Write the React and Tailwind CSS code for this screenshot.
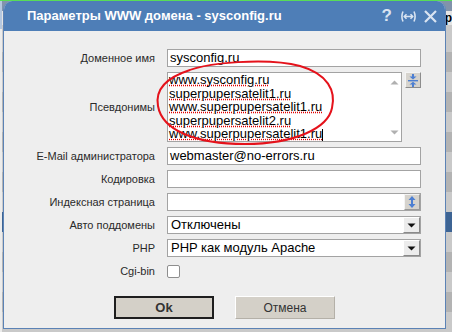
import React from "react";

const Label = ({ children }) => (
  <div className="text-right text-[11px] leading-[13px] text-[#2a2a2a] whitespace-nowrap">{children}</div>
);

const TextInput = ({ value }) => (
  <div className="h-[18px] bg-white border border-[#a3a3a3] pl-[2px] text-[13px] leading-[16px] text-black whitespace-nowrap overflow-hidden">
    {value}
  </div>
);

const SelectBox = ({ value }) => (
  <div className="h-[18px] bg-white border border-[#a3a3a3] flex items-stretch">
    <div className="flex-1 pl-[3px] text-[13px] leading-[16px] text-black whitespace-nowrap">{value}</div>
    <div className="w-[17px] bg-[#ececec] border-t border-l border-t-white border-l-white border-b border-r border-b-[#8a8a8a] border-r-[#8a8a8a] flex items-center justify-center">
      <svg width="9" height="5" viewBox="0 0 9 5">
        <path d="M0.5 0.5 H8.5 L4.5 4.5 Z" fill="#111" />
      </svg>
    </div>
  </div>
);

const aliases = [
  "www.sysconfig.ru",
  "superpupersatelit1.ru",
  "www.superpupersatelit1.ru",
  "superpupersatelit2.ru",
  "www.superpupersatelit1.ru",
];

const stripes = [
  ["h-[27px]", "bg-[#c9c9c9]"],
  ["h-[20px]", "bg-[#b3b3b3]"],
  ["h-[20px]", "bg-[#c9c9c9]"],
  ["h-[20px]", "bg-[#b3b3b3]"],
  ["h-[20px]", "bg-[#c9c9c9]"],
  ["h-[20px]", "bg-[#b3b3b3]"],
  ["h-[20px]", "bg-[#c9c9c9]"],
  ["h-[20px]", "bg-[#b3b3b3]"],
  ["h-[20px]", "bg-[#c9c9c9]"],
  ["h-[20px]", "bg-[#3d6494]"],
  ["h-[20px]", "bg-[#c9c9c9]"],
  ["h-[20px]", "bg-[#b3b3b3]"],
  ["h-[20px]", "bg-[#c9c9c9]"],
  ["h-[20px]", "bg-[#b3b3b3]"],
  ["h-[20px]", "bg-[#c9c9c9]"],
];

export default function App() {
  return (
    <div className="relative w-[452px] h-[332px] overflow-hidden bg-[#c6c6c6] font-['Liberation_Sans',Arial,sans-serif]">
      {/* background page */}
      <div className="flex flex-col h-full">
        <div className="h-[2px] bg-[#58dc58]" />
        <div className="flex flex-1">
          <div className="w-[9px] flex flex-col">
            <div className="h-[28px] bg-[#b4c7df]" />
            <div className="flex-1 bg-[#ececec]" />
          </div>
          <div className="flex-1 flex flex-col">
            <div className="h-[10px] bg-[#8193ab]" />
            <div className="h-[14px] bg-[#e4e4e4] pl-[437px] text-[12px] leading-[14px] font-bold text-black">тр</div>
            {stripes.map(([h, c], i) => (
              <div key={i} className={`${h} ${c}`} />
            ))}
          </div>
        </div>
      </div>

      {/* dialog window */}
      <div className="absolute left-[3px] top-[1px] w-[443px] h-[328px] rounded-t-[9px] border-x border-b border-[#5b82b5] bg-[#eeeeee] flex flex-col overflow-hidden">
        <div className="h-[30px] shrink-0 bg-[#4e7eb7] flex items-center pl-[23px] pr-[8px]">
          <div className="text-white font-bold text-[13px] leading-[16px] whitespace-nowrap">
            Параметры WWW домена - sysconfig.ru
          </div>
          <div className="ml-auto flex items-center">
            <span className="text-[#d9e4f1] font-bold text-[17px] leading-[18px]">?</span>
            <svg className="ml-[8px]" width="17" height="13" viewBox="0 0 17 13" fill="none" stroke="#d9e4f1" strokeWidth="1.6">
              <path d="M3 1.5 Q0.8 6.5 3 11.5" />
              <path d="M14 1.5 Q16.2 6.5 14 11.5" />
              <path d="M4.5 6.5 H12.5" />
              <path d="M6.5 4.2 L4.3 6.5 L6.5 8.8" />
              <path d="M10.5 4.2 L12.7 6.5 L10.5 8.8" />
            </svg>
            <svg className="ml-[7px]" width="13" height="13" viewBox="0 0 13 13" fill="none" stroke="#d9e4f1" strokeWidth="2.2">
              <path d="M1 1 L12 12 M12 1 L1 12" />
            </svg>
          </div>
        </div>

        <div className="flex-1 flex flex-col pt-[18px]">
          <div className="grid grid-cols-[151px_254px] gap-x-[12px] gap-y-[5px] items-center">
            <Label>Доменное имя</Label>
            <TextInput value="sysconfig.ru" />

            <Label>Псевдонимы</Label>
            <div className="flex items-start gap-[3px]">
              <div className="w-[235px] h-[70px] bg-white border border-[#a3a3a3] flex">
                <div className="flex-1 pl-[1px] pt-[0px] text-[13px] leading-[13.5px] text-black">
                  {aliases.map((a, i) => (
                    <div key={i} className="whitespace-nowrap">
                      <span className="underline decoration-dotted decoration-[#e00000] underline-offset-[1px]">{a}</span>
                      {i === aliases.length - 1 && (
                        <span className="inline-block w-[1px] h-[12px] bg-black align-middle" />
                      )}
                    </div>
                  ))}
                </div>
                <div className="w-[13px] flex flex-col justify-between items-center pt-[7px] pb-[6px]">
                  <svg width="9" height="5" viewBox="0 0 9 5">
                    <path d="M0.5 4.5 H8.5 L4.5 0.5 Z" fill="#b0b0b0" />
                  </svg>
                  <svg width="9" height="5" viewBox="0 0 9 5">
                    <path d="M0.5 0.5 H8.5 L4.5 4.5 Z" fill="#b0b0b0" />
                  </svg>
                </div>
              </div>
              <div className="w-[16px] h-[16px] bg-[#d6d3cd] border-t border-l border-t-[#f4f4f4] border-l-[#f4f4f4] border-b border-r border-b-[#8c8c8c] border-r-[#8c8c8c] flex items-center justify-center">
                <svg width="12" height="13" viewBox="0 0 12 13">
                  <path d="M5 0 H7 V2.5 H9.5 L6 5.5 L2.5 2.5 H5 Z" fill="#4d7fd2" />
                  <rect x="1" y="6" width="10" height="1.4" fill="#4d7fd2" />
                  <path d="M6 7.8 L9.5 10.6 H7 V13 H5 V10.6 H2.5 Z" fill="#4d7fd2" />
                </svg>
              </div>
            </div>

            <Label>E-Mail администратора</Label>
            <TextInput value="webmaster@no-errors.ru" />

            <Label>Кодировка</Label>
            <TextInput value="" />

            <Label>Индексная страница</Label>
            <div className="h-[18px] bg-white border border-[#a3a3a3] flex justify-end">
              <div className="w-[16px] bg-[#d6d3cd] border-t border-l border-t-[#f4f4f4] border-l-[#f4f4f4] border-b border-r border-b-[#9a9a9a] border-r-[#9a9a9a] flex items-center justify-center">
                <svg width="8" height="12" viewBox="0 0 8 12">
                  <path d="M4 0 L7.5 4 H5 V8 H7.5 L4 12 L0.5 8 H3 V4 H0.5 Z" fill="#4d7fd2" />
                </svg>
              </div>
            </div>

            <Label>Авто поддомены</Label>
            <SelectBox value="Отключены" />

            <Label>PHP</Label>
            <SelectBox value="PHP как модуль Apache" />

            <Label>Cgi-bin</Label>
            <div className="h-[18px] flex items-center">
              <div className="w-[13px] h-[13px] bg-white border border-[#8e8e8e] rounded-[2px]" />
            </div>
          </div>

          <div className="mt-[16px] flex justify-center gap-[21px]">
            <div className="w-[100px] h-[23px] bg-[#d4d0c8] border-2 border-[#1e1e1e] flex items-center justify-center text-[13px] font-bold text-[#333]">
              Ok
            </div>
            <div className="w-[100px] h-[23px] bg-[#d4d0c8] border border-t-white border-l-white border-b-[#b4b0a8] border-r-[#b4b0a8] flex items-center justify-center text-[12px] text-[#333]">
              Отмена
            </div>
          </div>
        </div>
      </div>

      {/* red hand-drawn ellipse */}
      <svg className="absolute left-[150px] top-[58px]" width="195" height="92" viewBox="0 0 195 92" fill="none">
        <path
          d="M30 16 C55 3 120 0 150 8 C178 16 186 33 182 50 C178 70 145 86 95 86 C45 86 12 72 8 48 C5 32 15 20 40 12"
          stroke="#e5121b"
          strokeWidth="2"
        />
      </svg>
    </div>
  );
}
